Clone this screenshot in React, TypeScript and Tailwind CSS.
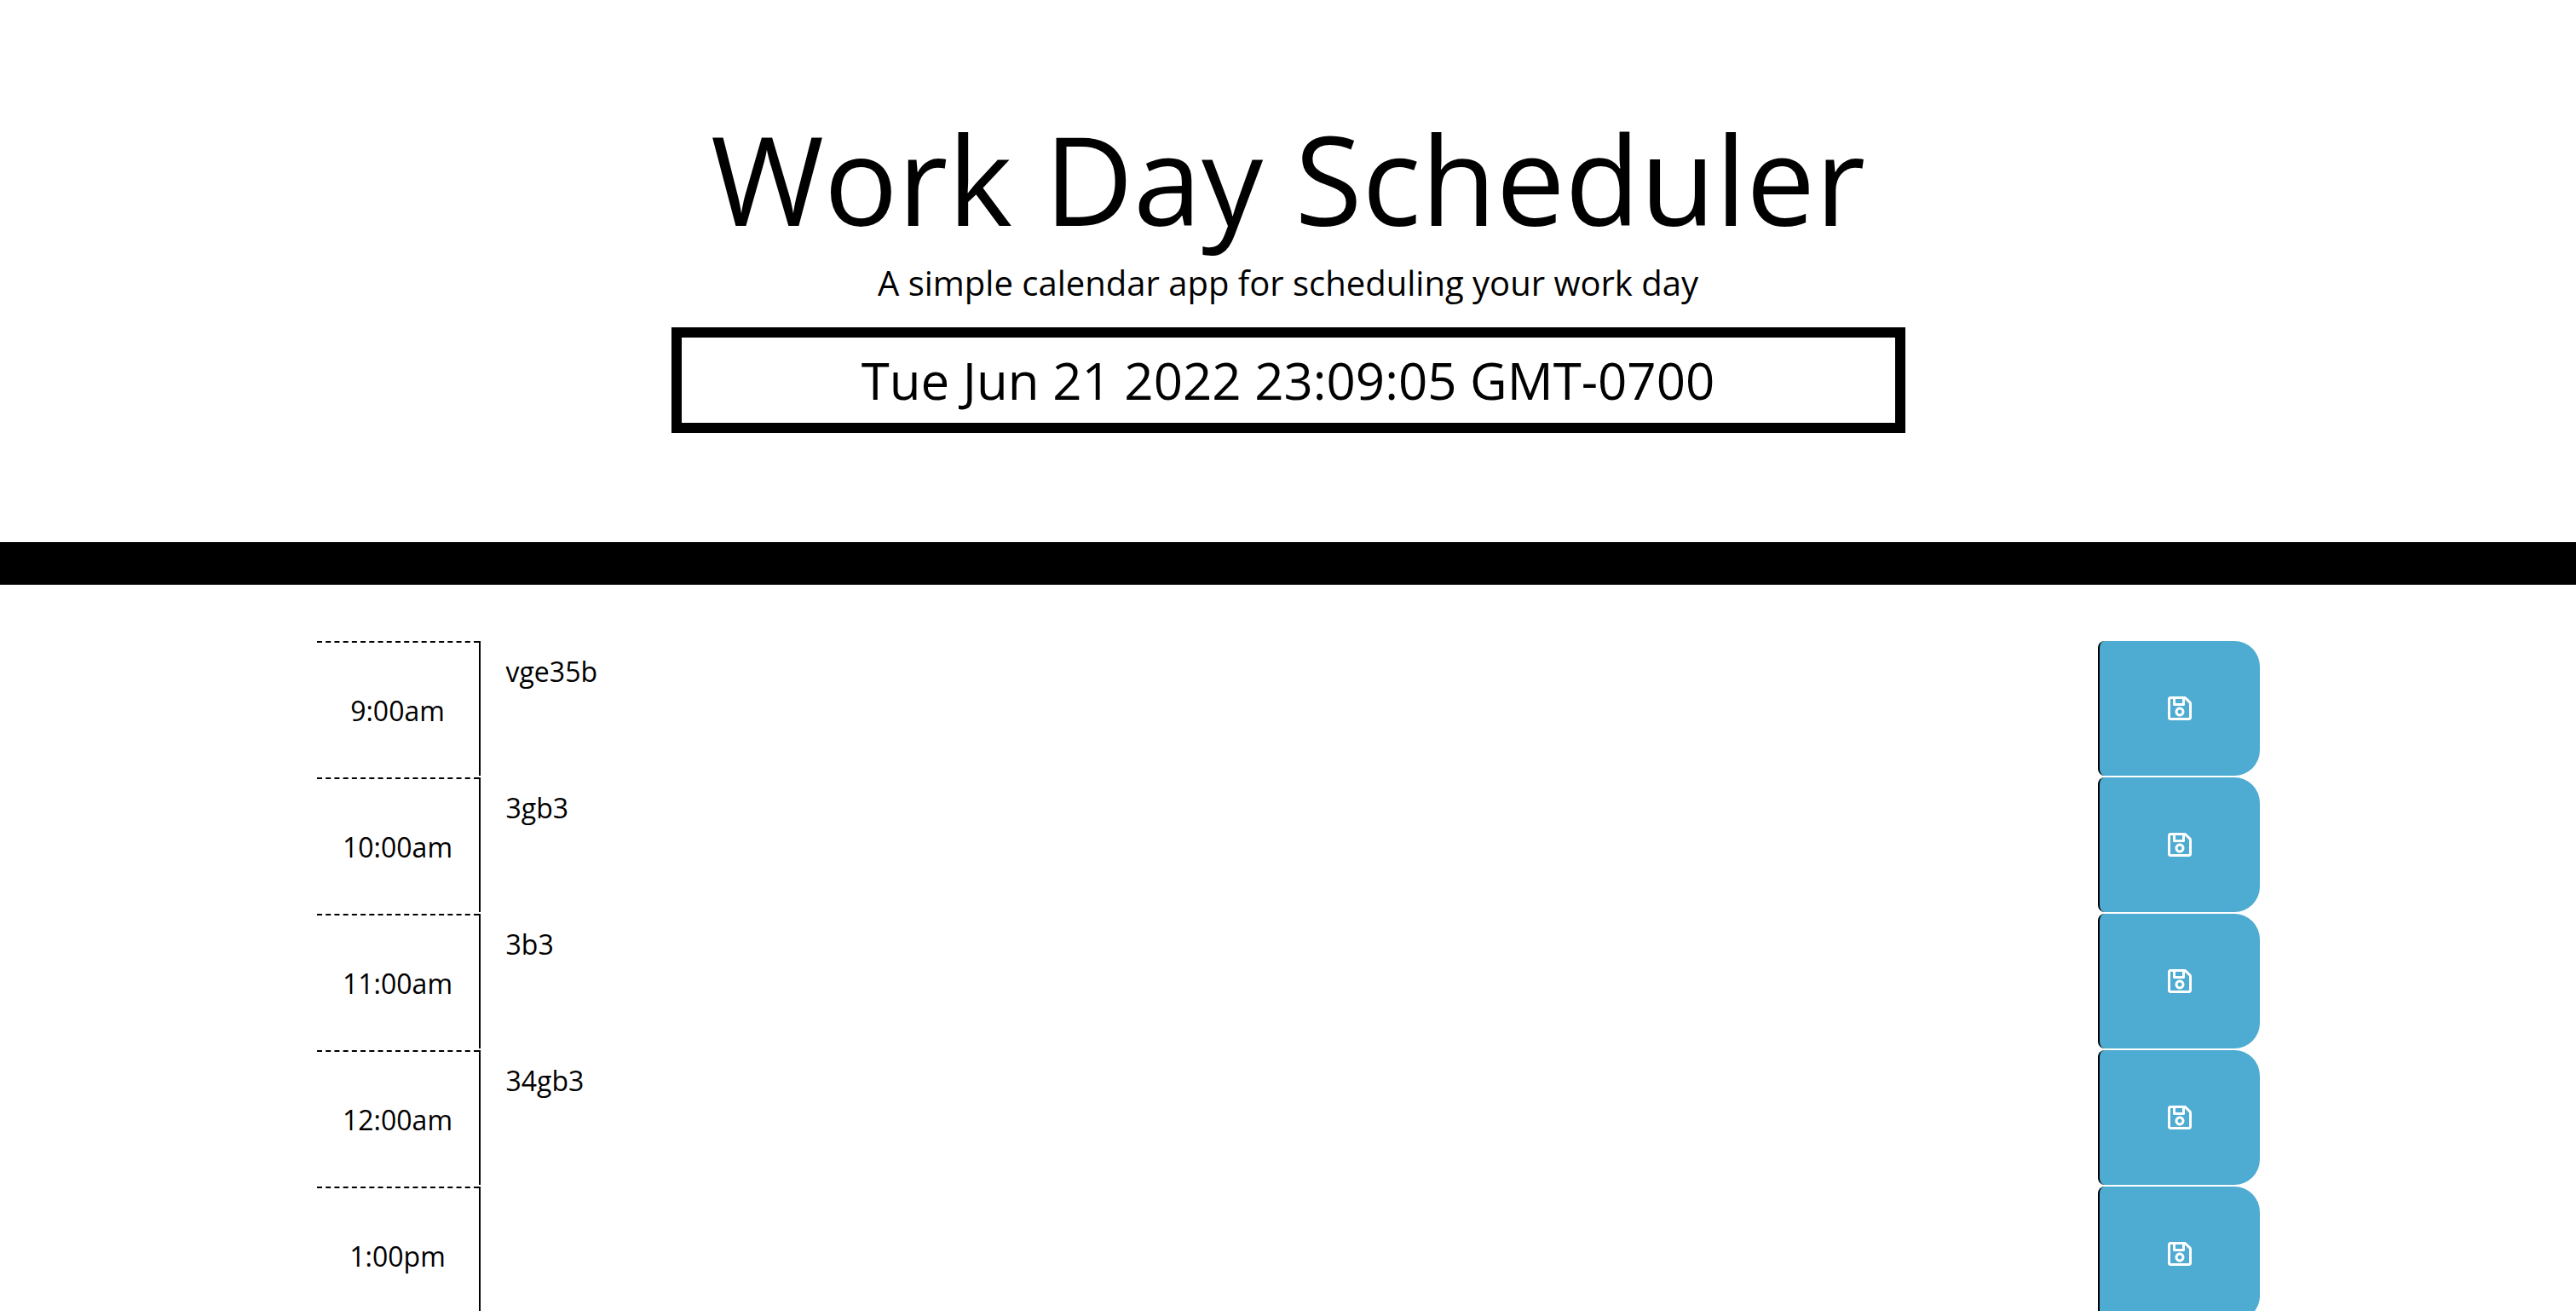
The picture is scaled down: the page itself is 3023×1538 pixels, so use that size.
import { useState } from "react";
import { FaRegSave } from "react-icons/fa";

type Slot = { hour: string; note: string };

const initialSlots: Slot[] = [
  { hour: "9:00am", note: "vge35b" },
  { hour: "10:00am", note: "3gb3" },
  { hour: "11:00am", note: "3b3" },
  { hour: "12:00am", note: "34gb3" },
  { hour: "1:00pm", note: "" },
];

function Header() {
  return (
    <header className="flex flex-col items-center border-b-[50px] border-black px-8 py-32 text-center">
      <h1 className="text-[144px] leading-[162px]">Work Day Scheduler</h1>
      <p className="mt-3 text-[40px] leading-[60px]">
        A simple calendar app for scheduling your work day
      </p>
      <p className="mt-[22px] w-full max-w-[1448px] border-[12px] border-black text-[60px] leading-[100px]">
        <time dateTime="2022-06-21T23:09:05-07:00">Tue Jun 21 2022 23:09:05 GMT-0700</time>
      </p>
    </header>
  );
}

function TimeBlock({ slot, onChange }: { slot: Slot; onChange: (note: string) => void }) {
  const id = `note-${slot.hour.replace(":", "")}`;
  return (
    <li className="grid grid-cols-12 text-[32px] leading-[48px]">
      <label
        htmlFor={id}
        className="h-40 border-t-2 border-dashed border-black pt-14 text-center"
      >
        {slot.hour}
      </label>
      <textarea
        id={id}
        value={slot.note}
        onChange={(event) => onChange(event.target.value)}
        className="col-span-10 block h-[158px] resize-none overflow-hidden border-l-2 border-black px-[30px] py-3 outline-none"
      />
      <button
        type="button"
        aria-label={`Save ${slot.hour}`}
        className="flex h-[158px] items-center justify-center rounded-l-lg rounded-r-[30px] border-l-2 border-black bg-[#4eabd1] text-white"
      >
        <FaRegSave aria-hidden="true" />
      </button>
    </li>
  );
}

export default function App() {
  const [slots, setSlots] = useState(initialSlots);

  const updateNote = (index: number, note: string) =>
    setSlots((current) => current.map((slot, i) => (i === index ? { ...slot, note } : slot)));

  return (
    <div className="bg-white font-['Open_Sans',sans-serif] text-black">
      <Header />
      <main>
        <ul className="mx-auto mt-[66px] max-w-[2280px]">
          {slots.map((slot, index) => (
            <TimeBlock key={slot.hour} slot={slot} onChange={(note) => updateNote(index, note)} />
          ))}
        </ul>
      </main>
    </div>
  );
}
